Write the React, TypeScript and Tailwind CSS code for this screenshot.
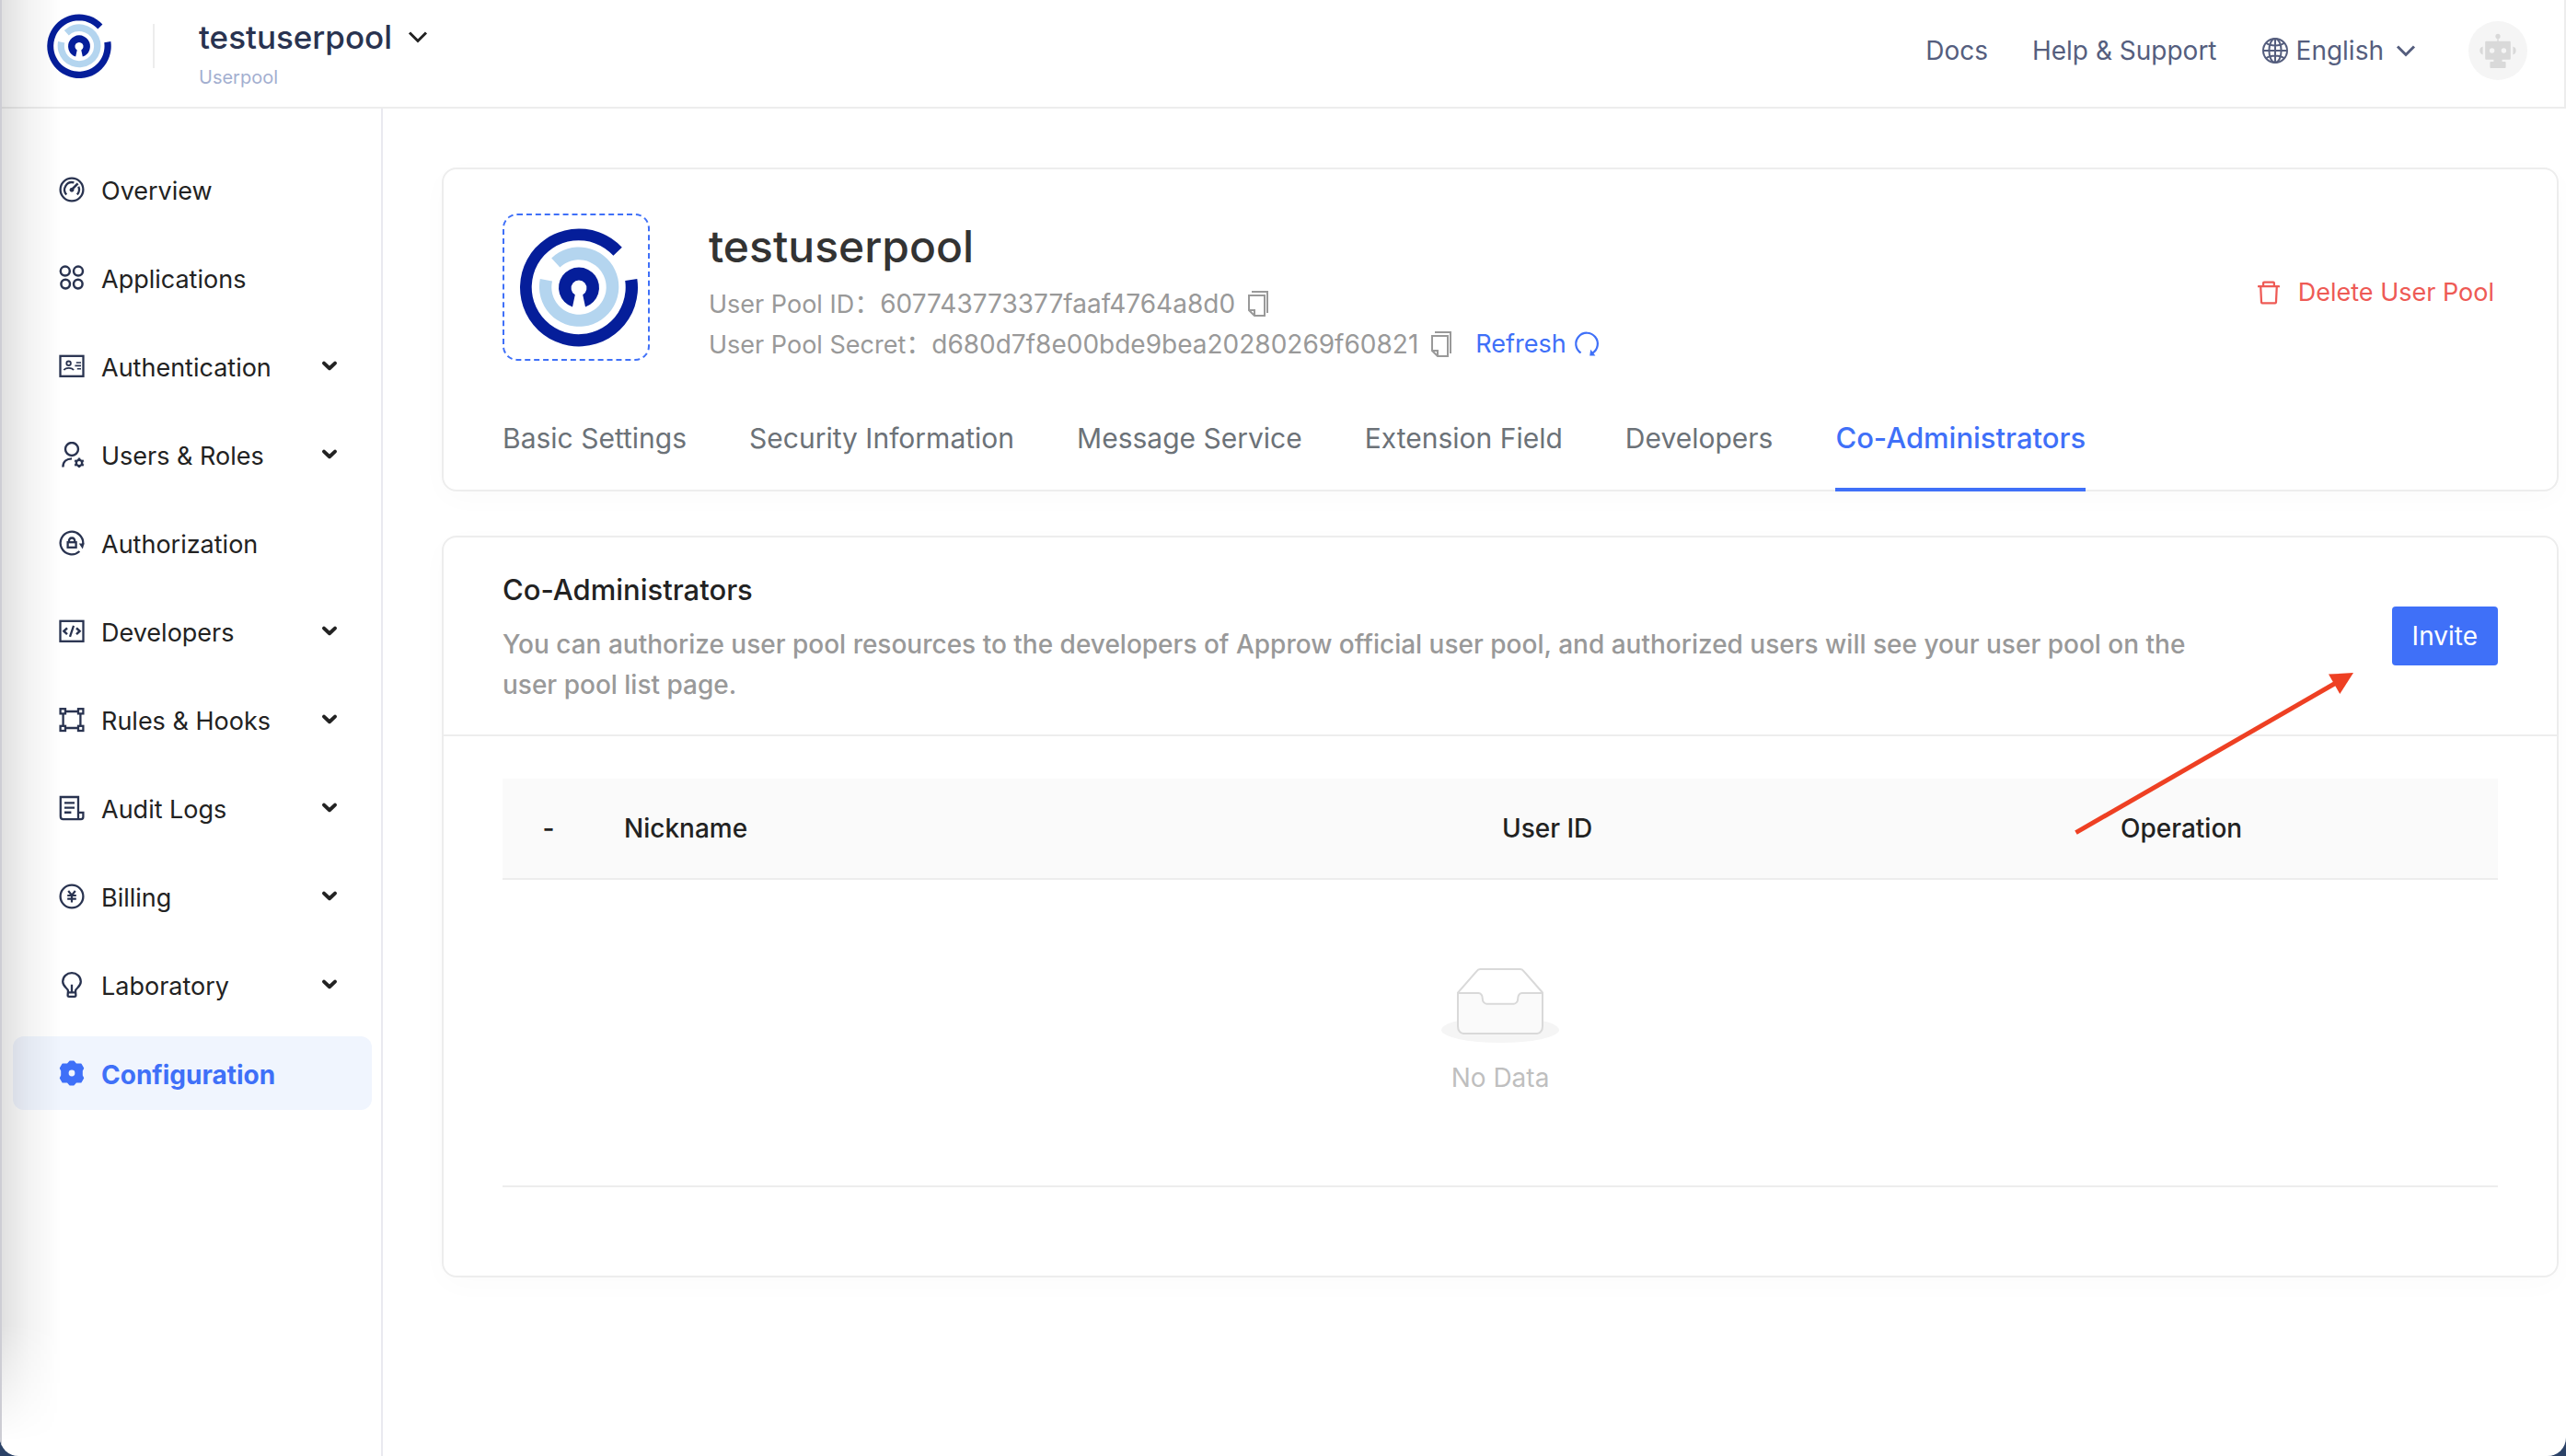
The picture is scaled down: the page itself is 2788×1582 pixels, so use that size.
import type { ReactNode } from "react";
import { AiOutlineDelete } from "react-icons/ai";

function Logo({ className }: { className: string }) {
  return (
    <svg viewBox="-70 -70 140 140" className={className} aria-hidden="true">
      <path d="M46.8 -43.2 A64 64 0 1 0 63.3 -9 L50.2 -7 A51 51 0 1 1 37.4 -34.2 Z" fill="#051e9a" />
      <path d="M-29.8 -31.5 A43.2 43.2 0 1 1 -42.2 -9 L-29 -6.5 A29.7 29.7 0 1 0 -20.6 -21.4 Z" fill="#b4d5ef" />
      <path
        d="M-7 21.4 A22 22 0 1 1 7 21.4 L4.2 8.2 A8.4 8.4 0 1 0 -4.2 8.2 Z"
        fill="#051e9a"
      />
    </svg>
  );
}

function Chevron({ className, strokeWidth }: { className: string; strokeWidth: number }) {
  return (
    <svg viewBox="0 0 24 24" fill="none" stroke="currentColor" strokeWidth={strokeWidth} className={className} aria-hidden="true">
      <path d="M3 7.5 L12 16.5 L21 7.5" />
    </svg>
  );
}

function SmallChevron() {
  return (
    <svg viewBox="0 0 24 24" fill="none" stroke="#222" strokeWidth="4" strokeLinecap="round" strokeLinejoin="round" className="size-6 shrink-0" aria-hidden="true">
      <path d="M6 8.6 L12 14.2 L18 8.6" />
    </svg>
  );
}

function Line({ children, width = 2.3 }: { children: ReactNode; width?: number }) {
  return (
    <svg viewBox="0 0 28 28" fill="none" stroke="#293350" strokeWidth={width} className="size-7 shrink-0" aria-hidden="true">
      {children}
    </svg>
  );
}

const icons: Record<string, ReactNode> = {
  overview: (
    <Line>
      <circle cx="14" cy="14" r="12.4" />
      <path d="M8.2 19.4 A8 8 0 0 1 16.4 6.4" />
      <path d="M21.3 10.8 A8 8 0 0 1 19.8 19.4" />
      <path d="M14 14 L20.6 7.4" strokeWidth="2.6" />
      <circle cx="14" cy="14.3" r="2.4" fill="#293350" stroke="none" />
    </Line>
  ),
  applications: (
    <Line width={2.5}>
      <circle cx="6.8" cy="6.6" r="5" />
      <circle cx="21" cy="6.6" r="5" />
      <circle cx="7.2" cy="20.6" r="4.8" />
      <circle cx="20.8" cy="20.6" r="4.8" />
    </Line>
  ),
  authentication: (
    <Line>
      <rect x="1.5" y="2.8" width="25" height="22" />
      <circle cx="10.6" cy="10.8" r="2.3" strokeWidth="1.8" />
      <path d="M5.4 18.2 C7 15 14.4 15 16 18.2" strokeWidth="1.8" />
      <path d="M18.8 10 H24 M17.4 13.4 H24 M19.8 16.8 H24" strokeWidth="1.6" />
    </Line>
  ),
  users: (
    <Line width={2.4}>
      <circle cx="14" cy="8" r="7" />
      <path d="M4.4 27.6 C4.4 21.6 8.6 18.4 14 18.4" />
      <circle cx="22" cy="23" r="3.2" strokeWidth="2.4" />
      <path
        d="M22 17.4 V20 M22 26 V28.4 M17.2 20.2 L19.4 21.5 M24.6 24.5 L26.8 25.8 M17.2 25.8 L19.4 24.5 M24.6 21.5 L26.8 20.2"
        strokeWidth="2.4"
      />
    </Line>
  ),
  authorization: (
    <Line>
      <path d="M26.2 15.4 A12.3 12.3 0 1 0 22.4 23" />
      <path d="M21.8 14.4 H27.6 L25.8 20.4 Z" fill="#293350" stroke="none" />
      <rect x="9.6" y="13.2" width="9" height="5.6" />
      <path d="M10.8 13 C10.8 7 17.4 7 17.4 13" />
    </Line>
  ),
  developers: (
    <Line>
      <rect x="1.5" y="2.8" width="25" height="22" />
      <path d="M9 10.4 L5.4 13.8 L9 17.2 M19 10.4 L22.6 13.8 L19 17.2" strokeWidth="2.5" />
      <path d="M16 7.8 L12 19.8" />
    </Line>
  ),
  rules: (
    <Line>
      <rect x="1.6" y="2.2" width="5.4" height="5.2" />
      <rect x="21" y="2.2" width="5.4" height="5.2" />
      <rect x="1.6" y="20.8" width="5.4" height="5.2" />
      <rect x="21" y="20.8" width="5.4" height="5.2" />
      <path d="M7 5 H21 M7 23 H21 M4.6 7.4 V20.8 M23.4 7.4 V20.8" />
    </Line>
  ),
  logs: (
    <Line>
      <path d="M21 18.6 V2 H1.8 V23 C1.8 25 3 26.2 4.6 26.2 H24 C25.6 26.2 26.4 25 26.4 23.6 V18.8 H21 V26" />
      <path d="M6 8.4 H17 M6 13.6 H17 M6 18.8 H13.4" strokeWidth="2.4" />
    </Line>
  ),
  billing: (
    <Line>
      <circle cx="14" cy="14" r="12.4" />
      <path d="M10.2 8 L14 12.8 L17.8 8 M14 12.8 V20.4 M9.2 13 H18.8 M9.2 16.6 H18.8" strokeWidth="2.2" />
    </Line>
  ),
  laboratory: (
    <Line>
      <path d="M10 20.6 C9.6 17.4 4.2 16.4 4.2 10.6 C4.2 5 8.6 1.2 14 1.2 C19.4 1.2 23.8 5 23.8 10.6 C23.8 16.4 18.4 17.4 18 20.6 L18.4 25.2 C18.4 26.4 17.8 26.8 17 26.8 H11 C10.2 26.8 9.6 26.4 9.6 25.2 Z" />
      <path d="M14 13.8 V22.2 M9.8 22.4 H18.2" />
    </Line>
  ),
  configuration: (
    <svg viewBox="0 0 28 28" className="size-7 shrink-0" aria-hidden="true">
      <path
        d="M11.8 1.4 H16.2 L18.8 4.4 L23.8 4.2 L26.4 8.6 L25 11.4 V16.6 L26.4 19.4 L23.8 23.8 L18.8 23.6 L16.2 26.6 H11.8 L9.2 23.6 L4.2 23.8 L1.6 19.4 L3 16.6 V11.4 L1.6 8.6 L4.2 4.2 L9.2 4.4 Z"
        fill="#3f70f8"
        stroke="#3f70f8"
        strokeWidth="1.6"
        strokeLinejoin="round"
      />
      <circle cx="14" cy="14" r="3.4" fill="#f0f5fe" />
    </svg>
  ),
};

const menu = [
  { label: "Overview", icon: "overview", open: false },
  { label: "Applications", icon: "applications", open: false },
  { label: "Authentication", icon: "authentication", open: true },
  { label: "Users & Roles", icon: "users", open: true },
  { label: "Authorization", icon: "authorization", open: false },
  { label: "Developers", icon: "developers", open: true },
  { label: "Rules & Hooks", icon: "rules", open: true },
  { label: "Audit Logs", icon: "logs", open: true },
  { label: "Billing", icon: "billing", open: true },
  { label: "Laboratory", icon: "laboratory", open: true },
];

const tabs = ["Basic Settings", "Security Information", "Message Service", "Extension Field", "Developers"];

function Globe() {
  return (
    <svg viewBox="0 0 30 30" fill="none" stroke="currentColor" strokeWidth="2" className="size-[30px]" aria-hidden="true">
      <circle cx="15" cy="15" r="13" />
      <ellipse cx="15" cy="15" rx="6.6" ry="13" />
      <path d="M15 2 V28 M2 15 H28 M5 6.6 C10 10.4 20 10.4 25 6.6 M5 23.4 C10 19.6 20 19.6 25 23.4" />
    </svg>
  );
}

function Robot() {
  return (
    <svg viewBox="0 0 64 64" className="size-16" aria-hidden="true">
      <circle cx="32" cy="32" r="32" fill="#f5f5f5" />
      <g fill="#d9d9d9">
        <circle cx="32" cy="16.4" r="2.6" />
        <rect x="31.3" y="17" width="1.4" height="6" />
        <rect x="18.2" y="21.8" width="27.6" height="20" rx="1" />
        <path d="M15.6 27.6 V36.4 A4.6 4.6 0 0 1 15.6 27.6 Z M48.4 27.6 V36.4 A4.6 4.6 0 0 0 48.4 27.6 Z" />
        <rect x="27.4" y="41" width="9.2" height="4" />
        <rect x="23.4" y="44" width="17.2" height="7" rx="1" />
      </g>
      <circle cx="25.6" cy="32" r="2.7" fill="#f5f5f5" />
      <circle cx="38.4" cy="32" r="2.7" fill="#f5f5f5" />
    </svg>
  );
}

function CopyButton({ label }: { label: string }) {
  return (
    <button type="button" aria-label={label} className="text-[#999]">
      <svg viewBox="0 0 22 28" fill="none" stroke="currentColor" strokeWidth="2" className="h-7 w-[22px]" aria-hidden="true">
        <path d="M4 1 H21 V24" />
        <path d="M1 5 H18 V27 H7 L1 21 Z" />
        <path d="M1 21 H7 V27" />
      </svg>
    </button>
  );
}

function RefreshIcon() {
  return (
    <svg viewBox="0 0 28 28" fill="none" stroke="currentColor" strokeWidth="2.2" className="size-7" aria-hidden="true">
      <path d="M7.6 23.4 A11.8 11.8 0 1 1 20.2 23.6" />
      <path d="M18.2 19.8 L17.2 26.4 H23.4 Z" fill="currentColor" stroke="none" />
    </svg>
  );
}

function EmptyBox() {
  return (
    <svg viewBox="0 0 64 41" className="h-[82px] w-32" aria-hidden="true">
      <g transform="translate(0 1)" fill="none" fillRule="evenodd">
        <ellipse fill="#f5f5f5" cx="32" cy="33" rx="32" ry="7" />
        <g fillRule="nonzero" stroke="#d9d9d9">
          <path d="M55 12.76L44.854 1.258C44.367.474 43.656 0 42.907 0H21.093c-.749 0-1.46.474-1.947 1.257L9 12.761V22h46v-9.24z" />
          <path
            d="M41.613 15.931c0-1.605.994-2.93 2.227-2.931H55v18.137C55 33.26 53.68 35 52.05 35h-40.1C10.32 35 9 33.259 9 31.137V13h11.16c1.233 0 2.227 1.323 2.227 2.928v.022c0 1.605 1.005 2.901 2.237 2.901h14.752c1.232 0 2.237-1.308 2.237-2.913v-.007z"
            fill="#fafafa"
          />
        </g>
      </g>
    </svg>
  );
}

export default function App() {
  return (
    <div className="min-h-screen bg-[#2b4267] font-[Inter,'Noto_Sans_CJK_SC',sans-serif] text-[27px] text-[#222]">
      <div className="relative flex min-h-screen flex-col overflow-hidden rounded-b-[20px] bg-white">
        <header className="flex h-[118px] items-start border-r-2 border-b-2 border-[#ededed] pr-10 pl-12">
          <div className="flex h-[100px] items-center">
            <a href="#home" aria-label="Home">
              <Logo className="size-[76px]" />
            </a>
            <span className="ml-[42px] h-12 w-0.5 bg-[#ededed]" />
          </div>
          <div className="ml-12 flex flex-col gap-2 pt-[18px]">
            <button type="button" className="flex items-center gap-4 text-[35px] leading-[44px] font-medium text-[#293350]">
              testuserpool
              <Chevron className="size-6 text-[#222]" strokeWidth={3} />
            </button>
            <span className="text-xl leading-7 text-[#a3afd0]">Userpool</span>
          </div>
          <nav className="ml-auto flex h-[109px] items-center gap-12 text-[28px] text-[#555e7e]">
            <a href="#docs">Docs</a>
            <a href="#help">Help &amp; Support</a>
            <button type="button" className="flex items-center">
              <Globe />
              <span className="mr-3 ml-2">English</span>
              <Chevron className="size-6" strokeWidth={3} />
            </button>
            <button type="button" aria-label="Account" className="ml-2">
              <Robot />
            </button>
          </nav>
        </header>

        <div className="flex flex-1">
          <aside className="w-[416px] shrink-0 border-r-2 border-[#e9e9f0] pt-12 pr-[10px] pl-[14px]">
            <nav className="flex flex-col gap-4">
              {menu.map((item) => (
                <a key={item.label} href="#" className="flex h-20 items-center gap-[18px] rounded-xl pr-[34px] pl-[50px]">
                  {icons[item.icon]}
                  <span className="flex-1 pt-1">{item.label}</span>
                  {item.open && <SmallChevron />}
                </a>
              ))}
              <a href="#" aria-current="page" className="flex h-20 items-center gap-[18px] rounded-xl bg-[#f0f5fe] pr-[34px] pl-[50px]">
                {icons.configuration}
                <span className="flex-1 pt-1 text-[28px] font-bold text-[#3f70f8]">Configuration</span>
              </a>
            </nav>
          </aside>

          <main className="min-w-0 flex-1 pt-16 pr-2 pb-16 pl-16">
            <section className="rounded-2xl border-2 border-[#ededed] px-16 pt-12 shadow-[0_8px_32px_rgba(0,40,40,0.02)]">
              <div className="flex items-center">
                <div className="flex size-40 items-center justify-center self-start rounded-2xl border-2 border-dashed border-[#3f70f8] pl-1.5">
                  <Logo className="size-[140px]" />
                </div>
                <div className="ml-16 py-2">
                  <h1 className="text-5xl leading-14 font-medium text-[#333]">testuserpool</h1>
                  <div className="mt-3 flex h-11 items-center gap-3.5 leading-11 text-[#999]">
                    <p>
                      User Pool ID<span className="text-[28px]">：607743773377faaf4764a8d0</span>
                    </p>
                    <CopyButton label="Copy user pool ID" />
                  </div>
                  <div className="flex h-11 items-center gap-3.5 leading-11 text-[#999]">
                    <p>
                      User Pool Secret<span className="text-[28px]">：d680d7f8e00bde9bea20280269f60821</span>
                    </p>
                    <CopyButton label="Copy user pool secret" />
                    <button type="button" className="ml-3 flex items-center gap-2 text-[#3f70f8]">
                      Refresh
                      <RefreshIcon />
                    </button>
                  </div>
                </div>
                <button type="button" className="ml-auto flex items-center gap-4 pr-1 text-[#ee5a55]">
                  <AiOutlineDelete className="size-8" />
                  Delete User Pool
                </button>
              </div>
              <div role="tablist" className="mt-[52px] -mb-0.5 flex gap-17 text-[30px] leading-10 text-[#6c7278]">
                {tabs.map((tab) => (
                  <button key={tab} type="button" role="tab" aria-selected={false} className="border-b-4 border-transparent pb-[34px]">
                    {tab}
                  </button>
                ))}
                <button type="button" role="tab" aria-selected={true} className="border-b-4 border-[#3f70f8] pb-[34px] text-[31px] font-medium text-[#3f70f8]">
                  Co-Administrators
                </button>
              </div>
            </section>

            <section className="relative mt-12 rounded-2xl border-2 border-[#ededed] shadow-[0_8px_32px_rgba(0,40,40,0.02)]">
              <div className="flex items-center justify-between border-b-2 border-[#ededed] px-16">
                <div className="max-w-[85%] pt-9 pb-8">
                  <h2 className="text-[31px] leading-[42px] font-medium">Co-Administrators</h2>
                  <p className="mt-4 text-[28px] leading-11 font-medium text-[#999]">
                    You can authorize user pool resources to the developers of Approw official user pool, and authorized users will see your user pool on the user pool list page.
                  </p>
                </div>
                <button type="button" className="h-16 rounded bg-[#3f70f8] px-[22px] text-[28px] text-white">
                  Invite
                </button>
              </div>
              <div className="px-16 pt-[46px] pb-24">
                <table className="w-full table-fixed border-collapse text-[28px]">
                  <thead>
                    <tr className="h-[109px] border-b-2 border-[#ededed] bg-[#fafafa] text-left">
                      <th className="w-[100px] text-center font-medium">-</th>
                      <th className="w-[44%] px-8 font-medium">Nickname</th>
                      <th className="w-[31%] px-8 font-medium">User ID</th>
                      <th className="px-8 font-medium">Operation</th>
                    </tr>
                  </thead>
                  <tbody>
                    <tr className="h-[334px] border-b-2 border-[#ededed]">
                      <td colSpan={4}>
                        <div className="flex flex-col items-center gap-4 leading-11 text-[#bfbfbf]">
                          <EmptyBox />
                          No Data
                        </div>
                      </td>
                    </tr>
                  </tbody>
                </table>
              </div>
              <svg viewBox="0 0 310 184" className="pointer-events-none absolute top-[142px] right-[218px] h-[184px] w-[310px]" aria-hidden="true">
                <path d="M5.5 178.7 L288 16" stroke="#ee4023" strokeWidth="5" />
                <path d="M307 5 L280 6.6 L292.3 28 Z" fill="#ee4023" />
              </svg>
            </section>
          </main>
        </div>

        <div className="pointer-events-none absolute inset-y-0 left-0 w-0.5 bg-[#cdcdd4]" />
        <div className="pointer-events-none absolute inset-y-0 left-0.5 w-16 bg-linear-to-r from-black/12 via-black/5 via-45% to-transparent [mask-image:linear-gradient(to_top,transparent_1%,black_9%)]" />
      </div>
    </div>
  );
}
